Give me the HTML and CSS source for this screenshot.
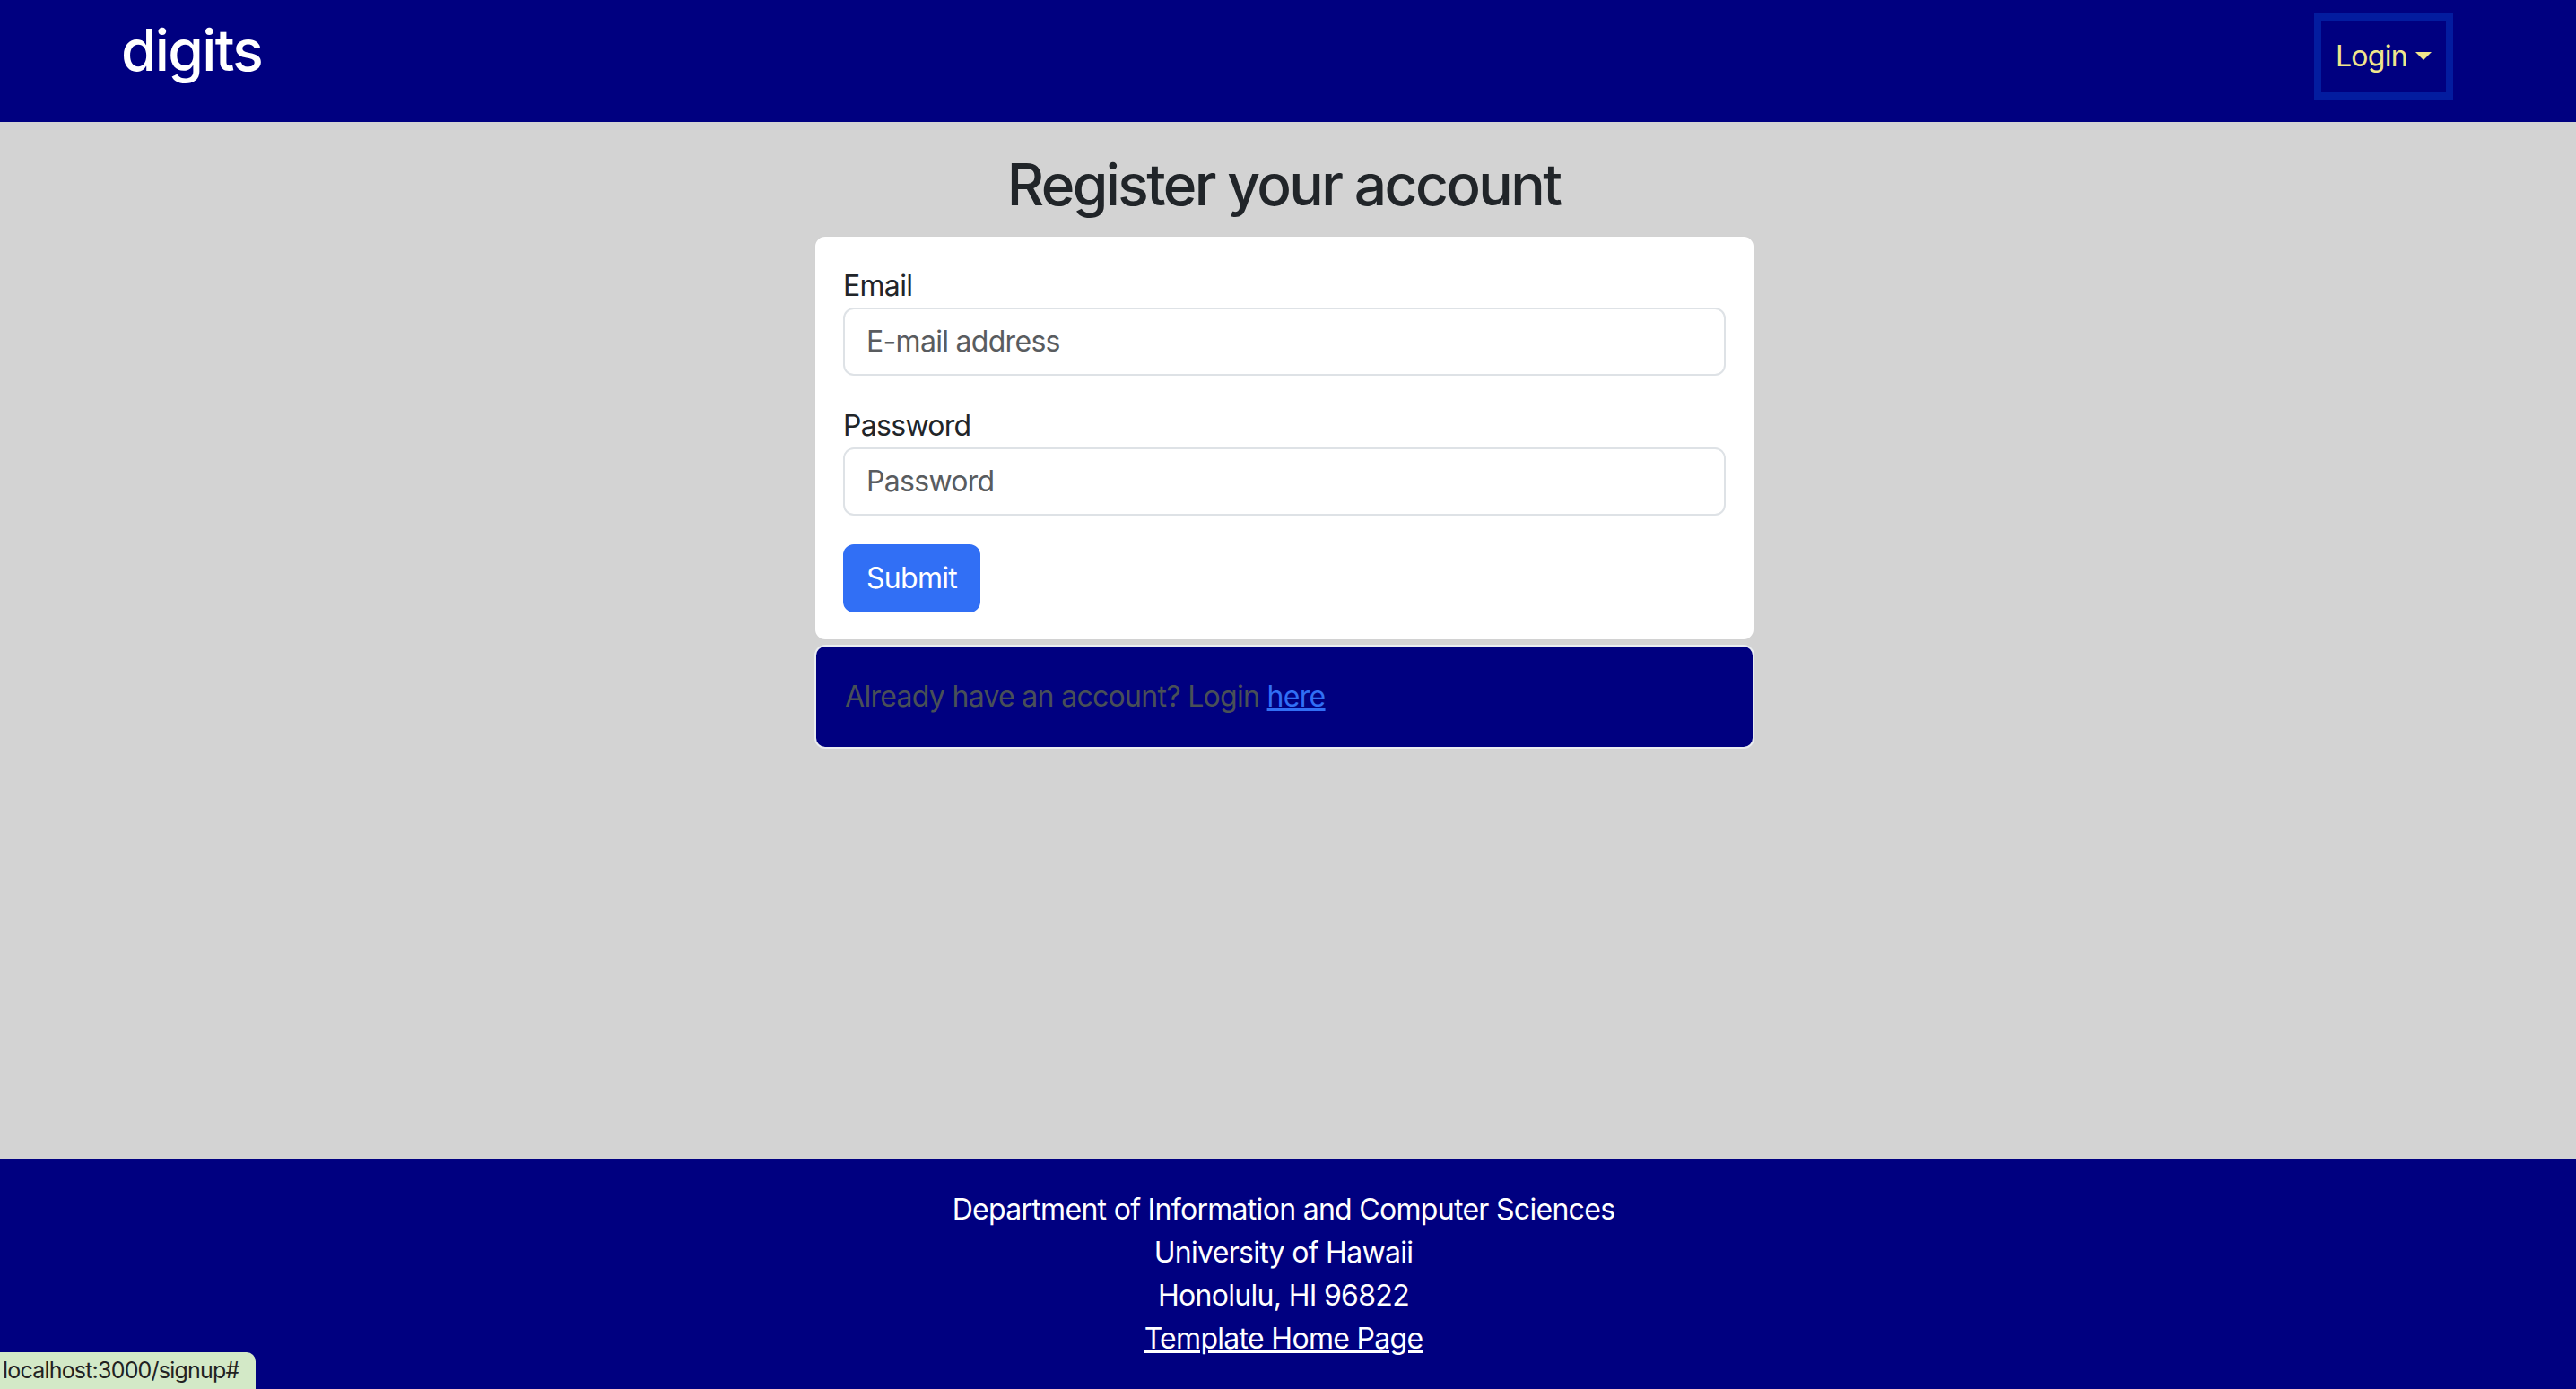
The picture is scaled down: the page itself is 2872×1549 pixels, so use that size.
FILE: index.html
```html
<!DOCTYPE html>
<html lang="en">
<head>
<meta charset="utf-8">
<title>digits</title>
<link rel="stylesheet" href="styles.css">
</head>
<body>
<div class="page">
  <nav class="navbar">
    <div class="container nav-inner">
      <h2 class="brand">digits</h2>
      <a class="nav-link" href="#">Login<span class="caret"></span></a>
    </div>
  </nav>

  <div class="content">
    <main class="container main">
      <h2 class="title">Register your account</h2>
      <div class="card">
        <form class="card-body">
          <div class="field">
            <label class="form-label" for="email">Email</label>
            <input class="form-control" id="email" type="email" placeholder="E-mail address">
          </div>
          <div class="field">
            <label class="form-label" for="password">Password</label>
            <input class="form-control" id="password" type="password" placeholder="Password">
          </div>
          <button class="btn" type="button">Submit</button>
        </form>
      </div>
      <div class="alert">Already have an account? Login <a class="alert-link" href="#">here</a></div>
    </main>
  </div>

  <footer class="footer">
    <div>Department of Information and Computer Sciences</div>
    <div>University of Hawaii</div>
    <div>Honolulu, HI 96822</div>
    <div><a class="footer-link" href="#">Template Home Page</a></div>
  </footer>
</div>
<div class="status-bubble">localhost:3000/signup#</div>
</body>
</html>
```

FILE: styles.css
```css
* {
  box-sizing: border-box;
}

html, body {
  margin: 0;
  padding: 0;
}

body {
  font-family: Inter, "Noto Sans", "Liberation Sans", sans-serif;
  font-size: 32px;
  line-height: 1.5;
  letter-spacing: -0.7px;
  color: #212529;
  background: #d3d3d3;
}

.page {
  min-height: 100vh;
  display: flex;
  flex-direction: column;
}

.container {
  width: 2640px;
  margin: 0 auto;
  padding: 0 24px;
}

/* Navbar */
.navbar {
  background: #000080;
  height: 136px;
  display: flex;
  padding-right: 10px;
}

.nav-inner {
  display: flex;
  align-items: center;
  justify-content: space-between;
  padding-bottom: 10px;
}

.brand {
  margin: 0 0 14px;
  font-size: 64px;
  font-weight: 500;
  line-height: 1.2;
  color: #ffffff;
  letter-spacing: -1.7px;
}

.nav-link {
  display: inline-flex;
  align-items: center;
  height: 80px;
  padding: 16px;
  color: #f0e68c;
  text-decoration: none;
  box-shadow: 0 0 0 8px rgba(13, 110, 253, 0.25);
}

.caret {
  display: inline-block;
  margin-left: 9px;
  width: 0;
  height: 0;
  border-top: 9.6px solid #f0e68c;
  border-left: 9.6px solid transparent;
  border-right: 9.6px solid transparent;
  position: relative;
  top: -1px;
}

/* Main */
.content {
  padding-right: 10px;
}

.main {
  margin-top: 32px;
  display: flex;
  flex-direction: column;
  align-items: center;
}

.title {
  margin: 0 0 18px;
  font-size: 64px;
  font-weight: 500;
  line-height: 1.2;
  letter-spacing: -2.6px;
  color: #212529;
  text-align: center;
}

.card {
  width: 1048px;
  background: #ffffff;
  border: 1px solid rgba(0, 0, 0, 0.175);
  border-radius: 12px;
  margin-left: 2px;
}

.card-body {
  padding: 31px 31px 30px;
  margin: 0;
}

.field {
  margin-bottom: 32px;
}

.form-label {
  display: block;
  line-height: 48px;
  color: #212529;
}

.form-control {
  display: block;
  width: 100%;
  height: 76px;
  padding: 12px 24px;
  font-family: inherit;
  font-size: 32px;
  letter-spacing: -0.7px;
  line-height: 48px;
  color: #212529;
  background: #ffffff;
  border: 2px solid #dee2e6;
  border-radius: 12px;
  outline: none;
}

.form-control::placeholder {
  color: #595c5f;
}

.btn {
  display: inline-block;
  height: 76px;
  padding: 12px 24px;
  font-family: inherit;
  font-size: 32px;
  letter-spacing: -0.7px;
  line-height: 48px;
  color: #ffffff;
  background: #316ff5;
  border: 2px solid #316ff5;
  border-radius: 12px;
  cursor: pointer;
}

.alert {
  width: 1048px;
  margin: 5px 0 0 2px;
  padding: 32px;
  background: #000080;
  color: #495057;
  border: 2px solid #e9ecef;
  border-radius: 12px;
  line-height: 48px;
}

.alert-link {
  color: #316ff5;
  text-decoration: underline;
}

/* Footer */
.footer {
  margin-top: auto;
  background: #000080;
  color: #ffffff;
  text-align: center;
  padding: 32px 10px 32px 0;
  line-height: 48px;
}

.footer-link {
  color: #ffffff;
  text-decoration: underline;
}

/* Browser status bubble overlay */
.status-bubble {
  position: fixed;
  left: 0;
  bottom: 0;
  width: 285px;
  height: 41px;
  padding: 2px 0 0 3px;
  background: #d3e9c7;
  color: #222222;
  font-size: 25px;
  letter-spacing: -0.8px;
  line-height: 36px;
  border-top-right-radius: 10px;
  white-space: nowrap;
  overflow: hidden;
}
```
